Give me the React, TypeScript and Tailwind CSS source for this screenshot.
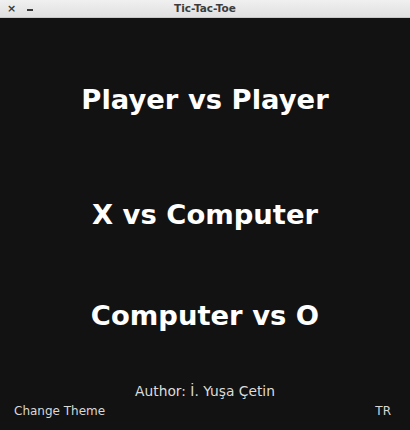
import React from 'react';

const modes = ['Player vs Player', 'X vs Computer', 'Computer vs O'];

export default function App() {
  return (
    <div className="w-[410px] h-[430px] flex flex-col bg-[#121212] overflow-hidden" style={{ fontFamily: '"DejaVu Sans", sans-serif' }}>
      {/* window title bar */}
      <div className="relative h-[18px] shrink-0 flex items-center justify-center bg-gradient-to-b from-[#f0f0f0] to-[#e0e0e0] border-b border-[#c8c8c8]">
        <div className="absolute left-[7px] top-0 h-full flex items-center gap-[11px] text-[#3a3a3a]">
          <span className="text-[11px] font-bold leading-none">×</span>
          <span className="w-[6px] h-[2px] bg-[#3a3a3a] mt-[3px]" />
        </div>
        <span className="text-[10.5px] font-bold text-[#3c3c3c] leading-none">Tic-Tac-Toe</span>
      </div>

      <div className="flex-1 flex flex-col items-center">
        <button className="mt-[66px] text-[27.4px] leading-[31px] font-bold text-white">{modes[0]}</button>
        <button className="mt-[84px] text-[27.4px] leading-[31px] font-bold text-white">{modes[1]}</button>
        <button className="mt-[70px] text-[27.4px] leading-[31px] font-bold text-white">{modes[2]}</button>

        <div className="mt-auto w-full flex flex-col">
          <div className="text-center text-[13.8px] leading-[16px] text-[#dcdcdc]">Author: İ. Yuşa Çetin</div>
          <div className="flex justify-between px-[14px] pt-[5px] pb-[12px] text-[12px] leading-[14px] text-[#d8d8d8]">
            <button>Change Theme</button>
            <button className="mr-[5px]">TR</button>
          </div>
        </div>
      </div>
    </div>
  );
}
